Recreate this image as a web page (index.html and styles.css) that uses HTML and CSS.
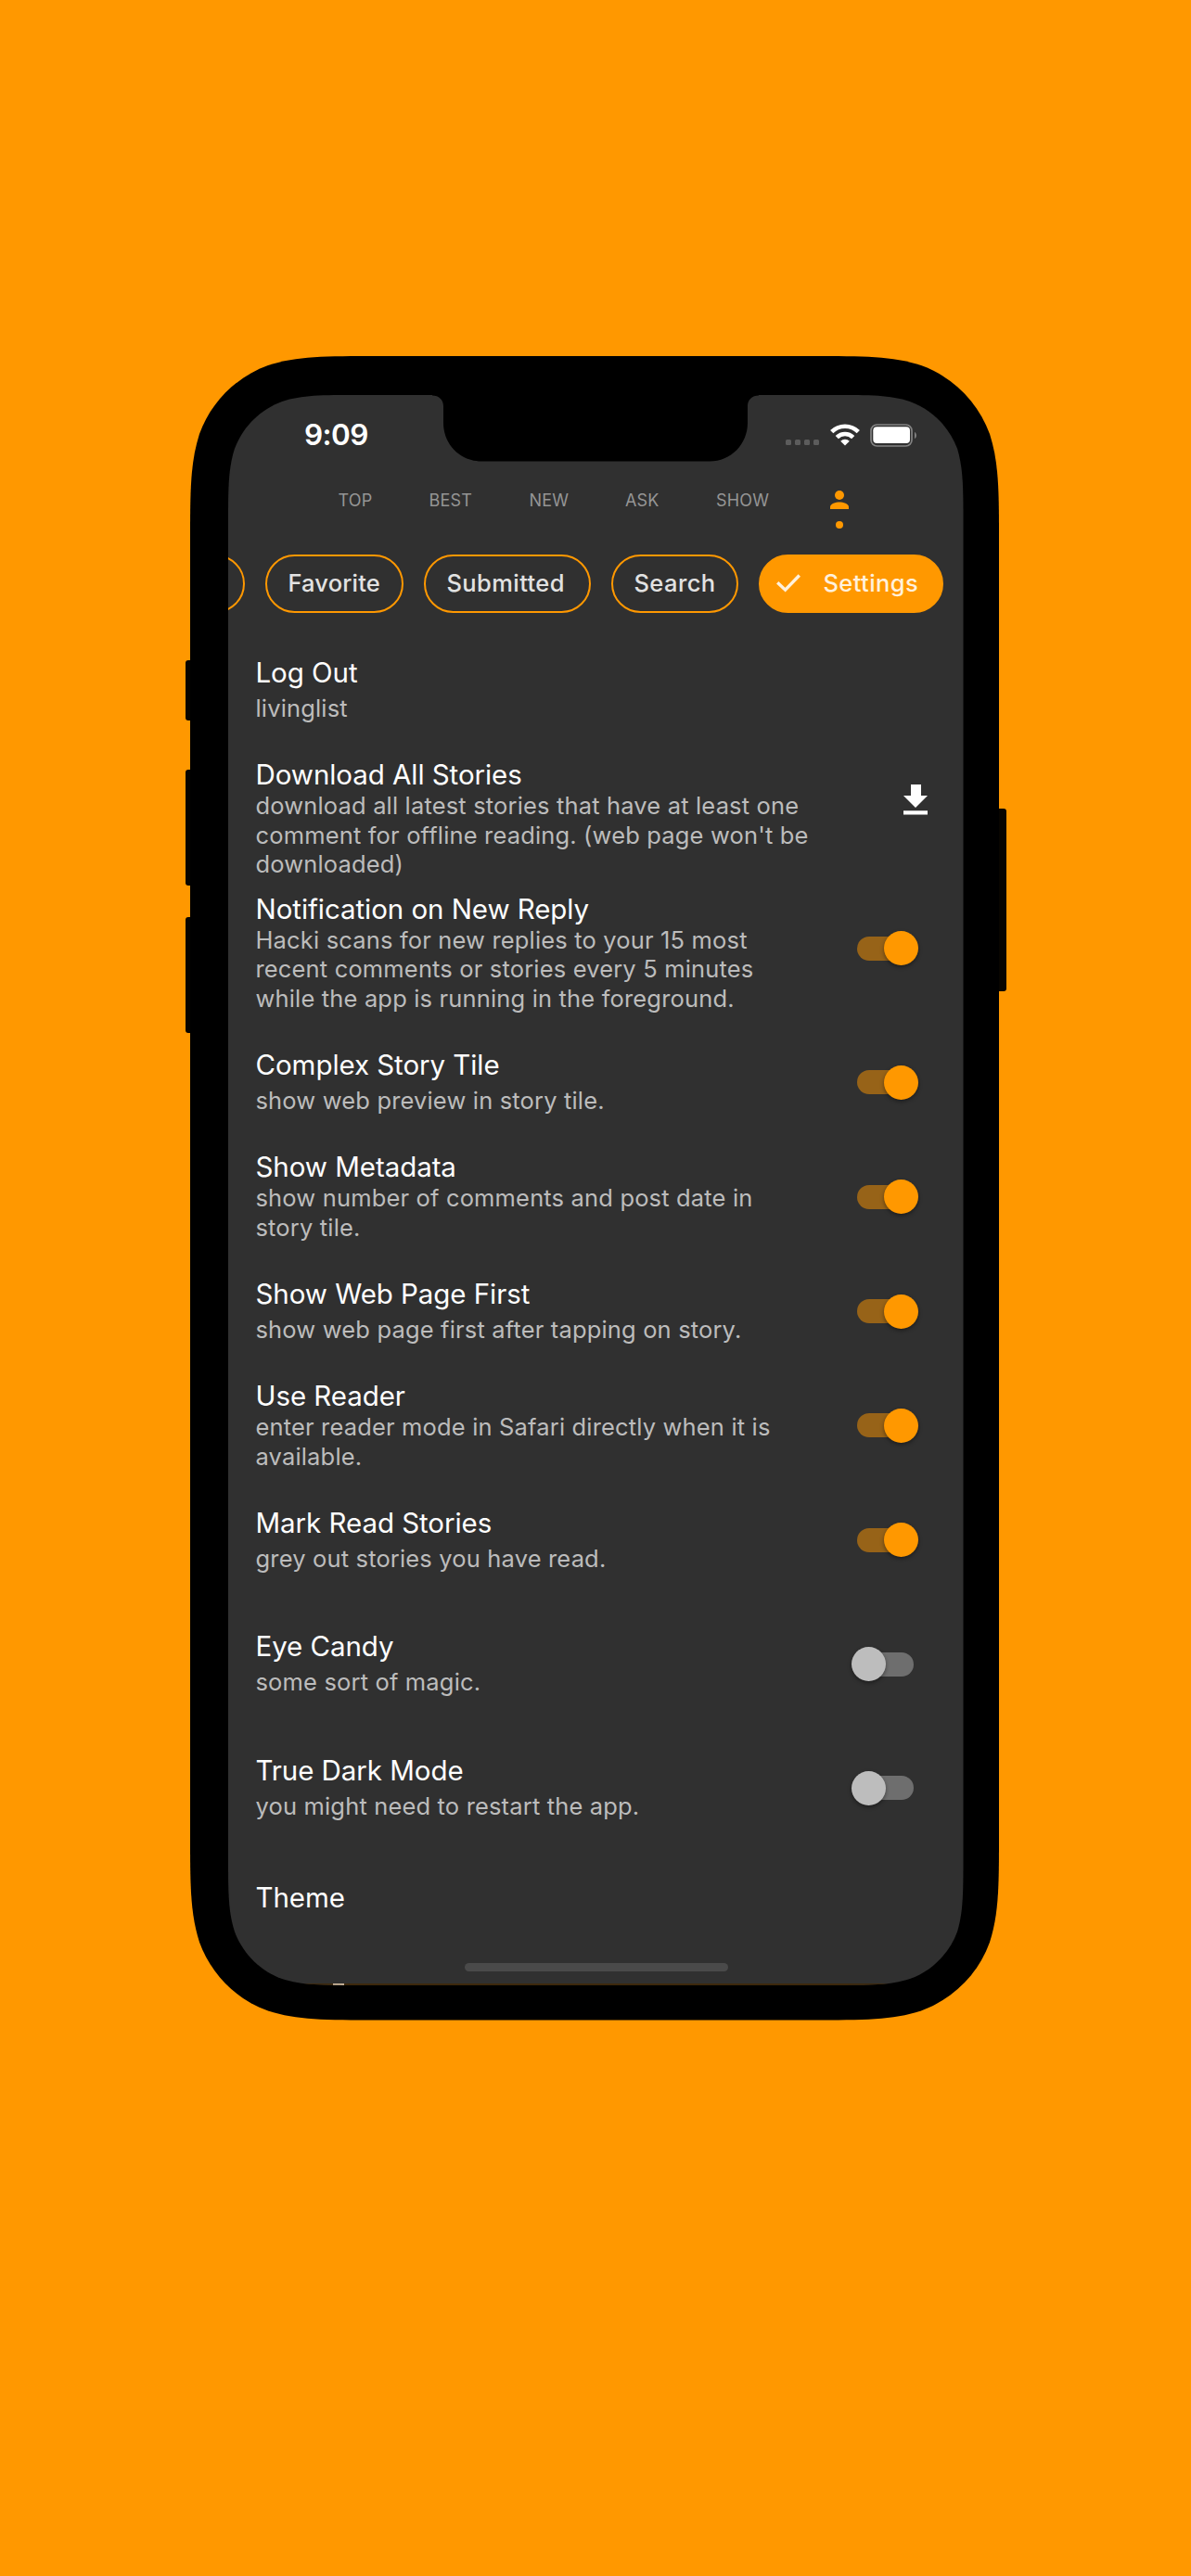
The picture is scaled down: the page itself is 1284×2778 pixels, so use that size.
FILE: index.html
```
<!DOCTYPE html>
<html lang="en">
<head>
<meta charset="utf-8">
<title>Hacki Settings</title>
<link rel="stylesheet" href="styles.css">
</head>
<body>
<div class="phone">
  <i class="key key-mute"></i><i class="key key-up"></i><i class="key key-down"></i><i class="key key-power"></i>
  <div class="case">
    <main class="screen">
      <header class="status">
        <span class="clock">9:09</span>
        <span class="signal"><i></i><i></i><i></i><i></i></span>
        <svg class="wifi" viewBox="0 0 32 24" fill="none" stroke="#fff" stroke-width="4.6">
          <path d="M1.700 8.600a20.300 20.300 0 0 1 28.600 0"/>
          <path d="M7.300 14.600a12.300 12.300 0 0 1 17.400 0"/>
          <path d="M16 23.500l-4.800-4.700a6.800 6.800 0 0 1 9.600 0z" fill="#fff" stroke="none"/>
        </svg>
        <svg class="battery" viewBox="0 0 52 26">
          <rect x="1" y="1" width="44" height="23" rx="6.5" fill="none" stroke="#828282" stroke-width="1.7"/>
          <rect x="3.3" y="3.3" width="39.7" height="17.800" rx="4" fill="#fff"/>
          <path d="M48 9C50.600 10 50.600 15 48 16z" fill="#828282"/>
        </svg>
      </header>
      <svg class="notch" viewBox="0 0 352 72"><path d="M0 0H352V.5C345 .5 340 5 340 12V30C340 53 322 71.500 299 71.500H53C30 71.500 12 53 12 30V12C12 5 7 .5 0 .5z"/></svg>
      <nav class="tabs">
        <span class="tab tab-top">TOP</span><span class="tab tab-best">BEST</span><span class="tab tab-new">NEW</span><span class="tab tab-ask">ASK</span><span class="tab tab-show">SHOW</span>
        <span class="tab-me"><svg viewBox="0 0 20 20"><circle cx="10" cy="5" r="5"/><path d="M0 20v-2.500C0 14.200 6 12.400 10 12.400S20 14.200 20 17.500V20z"/></svg><i></i></span>
      </nav>
      <div class="chips">
        <span class="chip chip-cut"></span>
        <span class="chip chip-favorite">Favorite</span>
        <span class="chip chip-submitted">Submitted</span>
        <span class="chip chip-search">Search</span>
        <span class="chip chip-on"><svg viewBox="0 0 26 20"><path d="M1.200 9.200L9.600 17.200 24.800 1.500" fill="none" stroke="#fff1dc" stroke-width="3.400"/></svg>Settings</span>
      </div>
      <section class="list">
        <div class="row short"><div class="copy"><h2>Log Out</h2><p>livinglist</p></div></div>
        <div class="row tall"><div class="copy"><h2>Download All Stories</h2><p>download all latest stories that have at least one<br>comment for offline reading. (web page won't be<br>downloaded)</p></div>
          <svg class="download" viewBox="0 0 26 33"><path d="M8 0h11v12h7L13 25 0 12h8zM0 28.200h26v4.300H0z" fill="#fff"/></svg></div>
        <div class="row tall"><div class="copy"><h2>Notification on New Reply</h2><p>Hacki scans for new replies to your 15 most<br>recent comments or stories every 5 minutes<br>while the app is running in the foreground.</p></div><i class="switch on"></i></div>
        <div class="row short apart"><div class="copy"><h2>Complex Story Tile</h2><p>show web preview in story tile.</p></div><i class="switch on"></i></div>
        <div class="row"><div class="copy"><h2>Show Metadata</h2><p>show number of comments and post date in<br>story tile.</p></div><i class="switch on"></i></div>
        <div class="row short"><div class="copy"><h2>Show Web Page First</h2><p>show web page first after tapping on story.</p></div><i class="switch on"></i></div>
        <div class="row"><div class="copy"><h2>Use Reader</h2><p>enter reader mode in Safari directly when it is<br>available.</p></div><i class="switch on"></i></div>
        <div class="row short"><div class="copy"><h2>Mark Read Stories</h2><p>grey out stories you have read.</p></div><i class="switch on"></i></div>
        <div class="row short apart"><div class="copy"><h2>Eye Candy</h2><p>some sort of magic.</p></div><i class="switch"></i></div>
        <div class="row short apart"><div class="copy"><h2>True Dark Mode</h2><p>you might need to restart the app.</p></div><i class="switch"></i></div>
        <div class="row theme"><div class="copy"><h2>Theme</h2></div></div>
      </section>
      <i class="peek"></i>
      <i class="home"></i>
    </main>
  </div>
</div>
</body>
</html>
```
FILE: styles.css
```
* { box-sizing: border-box; }
body {
  margin: 0;
  height: 2778px;
  padding: 384px 0 0 205px;
  background: #ff9800;
  font-family: Inter, "Noto Sans", sans-serif;
  overflow: hidden;
}
h2, p { margin: 0; font-weight: 400; }
i { display: block; }

.phone { position: relative; width: 872px; height: 1794px; }
.case {
  position: relative;
  width: 872px;
  height: 1794.500px;
  padding: 42px 34px 0 41px;
  background: #000;
  clip-path: path("M203.300 0H668.700C727.200 0 756.500 0 788 10C822.400 22.500 849.500 49.600 862 84C872 115.500 872 144.800 872 203.300V1591C872 1649.500 872 1679 862 1710.500C849.500 1745 822.400 1772 788 1784.500C756.500 1794.500 727.200 1794.500 668.700 1794.500H203.300C144.800 1794.500 115.500 1794.500 84 1784.500C49.600 1772 22.500 1745 10 1710.500C0 1679 0 1649.500 0 1591V203.300C0 144.800 0 115.500 10 84C22.500 49.600 49.600 22.500 84 10C115.500 0 144.800 0 203.300 0Z");
}
.screen {
  position: relative;
  width: 792.500px;
  height: 1715px;
  background: #303030;
  border-bottom: 2px solid #3c280c;
  clip-path: path("M140.600 0H652.400C692.900 0 713.100 0 734.900 6.900C758.700 15.600 777.400 34.300 786.100 58.100C792.500 79.900 792.500 100.100 792.500 140.600V1574.400C792.500 1614.900 792.500 1635.100 786.100 1656.900C777.400 1680.700 758.700 1699.400 734.900 1708.100C713.100 1715 692.900 1715 652.400 1715H140.600C100.100 1715 79.900 1715 58.100 1708.100C34.300 1699.400 15.600 1680.700 6.900 1656.900C0 1635.100 0 1614.900 0 1574.400V140.600C0 100.100 0 79.900 6.900 58.100C15.600 34.300 34.300 15.600 58.100 6.900C79.900 0 100.100 0 140.600 0Z");
}
.key { position: absolute; left: -5.500px; width: 10px; background: #080500; border-radius: 3px; }
.key-mute { top: 328px; height: 65px; }
.key-up { top: 446px; height: 125px; }
.key-down { top: 605px; height: 125px; }
.key-power { top: 488px; left: 869px; width: 10.500px; height: 197px; }

.status { display: flex; align-items: flex-start; height: 90px; padding: 23px 0 0 82px; color: #fff; }
.clock { width: 519px; margin-top: 1px; font-size: 31.500px; font-weight: 600; line-height: 38px; letter-spacing: -0.600px; }
.signal { display: flex; gap: 4px; width: 48px; padding-top: 25px; }
.signal i { width: 6px; height: 6px; border-radius: 1.500px; background: #5c5c5c; }
.wifi { width: 32px; height: 24px; margin: 7.500px 0 0 -0.500px; }
.battery { width: 52px; height: 26px; margin: 7.500px 0 0 11px; }
.notch { position: absolute; left: 220px; top: -0.500px; width: 352px; height: 72px; }

.tabs { display: flex; height: 82px; padding-left: 118.500px; color: #959595; font-size: 18px; line-height: 22px; letter-spacing: 0.200px; }
.tab { padding-top: 12.500px; }
.tab-top { width: 98px; }
.tab-best { width: 108px; }
.tab-new { width: 103.500px; }
.tab-ask { width: 98px; }
.tab-show { width: 123px; }
.tab-me { padding-top: 12.500px; }
.tab-me svg { display: block; width: 20px; height: 20px; fill: #ff9800; }
.tab-me i { width: 8px; height: 8px; margin: 13.500px 0 0 6px; border-radius: 50%; background: #ff9800; }

.chips { display: flex; gap: 22px; height: 85px; margin-left: -82px; align-items: flex-start; }
.chip {
  display: flex; align-items: center; flex: none;
  height: 63px; padding: 0 0 1.500px 22.500px;
  border: 2px solid #ff9800; border-radius: 31.500px;
  color: #e2e2e2; font-size: 25.500px; font-weight: 500; letter-spacing: 0.400px; white-space: nowrap;
}
.chip-cut { width: 100px; }
.chip-favorite { width: 149px; letter-spacing: 0.150px; }
.chip-submitted { width: 180px; }
.chip-search { width: 137px; }
.chip-on { width: 199px; background: #ff9800; color: #fff1dc; padding-left: 17px; }
.chip-on svg { width: 26px; height: 20px; margin-right: 24.500px; }

.row { display: flex; justify-content: space-between; height: 123.400px; padding: 12.400px 47.500px 0 29.500px; }
.row.short { padding-top: 25.400px; }
.row.tall { height: 144.500px; padding-top: 11.700px; }
.row.apart { margin-top: 10.300px; }
.row.theme { padding-top: 39px; height: 100px; }
.copy { margin-top: -1px; }
h2 { color: #fff; font-size: 29.500px; line-height: 36px; letter-spacing: -0.060px; white-space: nowrap; }
p { color: #bcbcbc; font-size: 25.500px; line-height: 31.500px; letter-spacing: 0.160px; white-space: nowrap; }
.short p { margin-top: 5px; }

.switch { position: relative; flex: none; width: 74px; height: 37px; margin-top: 30.700px; }
.short .switch { margin-top: 17.700px; }
.tall .switch { margin-top: 41.800px; }
.switch::before { content: ""; position: absolute; left: 7px; top: 5.500px; width: 61px; height: 26px; border-radius: 13px; background: #6e6e6e; }
.switch::after { content: ""; position: absolute; left: 1px; top: 0; width: 37px; height: 37px; border-radius: 50%; background: #bdbdbd; box-shadow: 0 2px 4px rgba(0,0,0,.4); }
.switch.on::before { background: #976318; }
.switch.on::after { left: 36px; background: #ff9800; }
.download { flex: none; width: 26px; height: 33px; margin: 28px -9px 0 0; }

.peek { position: absolute; left: 113px; top: 1713px; width: 12px; height: 2px; background: #c8b49a; }
.home { position: absolute; left: 255px; top: 1691px; width: 284px; height: 9px; border-radius: 5px; background: #4a4a4a; }
```
